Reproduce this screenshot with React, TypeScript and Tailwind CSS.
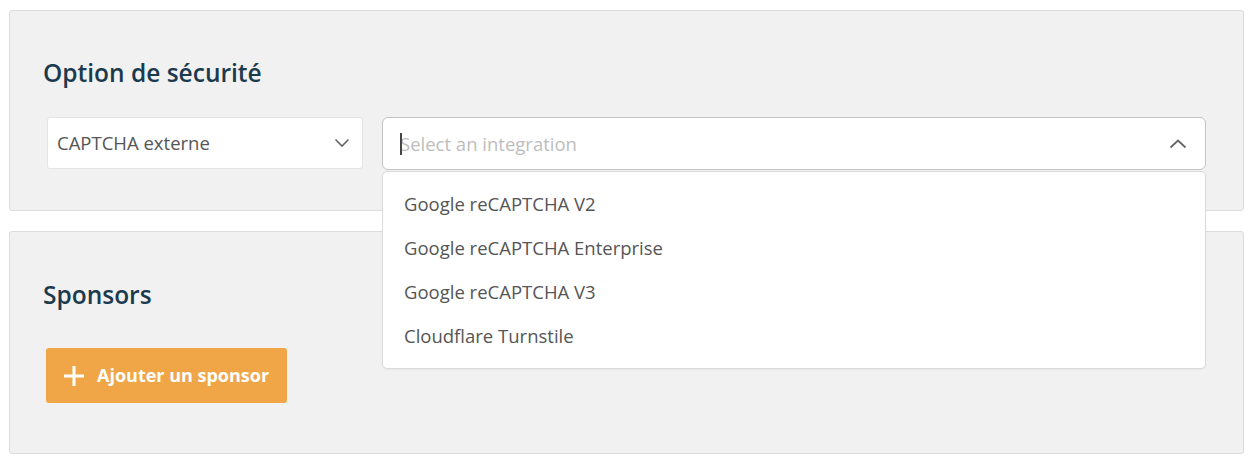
import React from "react";

export default function App() {
  const items = [
    "Google reCAPTCHA V2",
    "Google reCAPTCHA Enterprise",
    "Google reCAPTCHA V3",
    "Cloudflare Turnstile",
  ];
  return (
    <div className="w-[1254px] h-[464px] bg-white pl-[9px] pr-[10px] pt-[10px] font-['Open_Sans',sans-serif]">
      <div className="relative z-10 h-[201px] rounded-[3px] border border-[#dcdcdc] bg-[#f1f1f1] pl-[33px] pr-[37px] pt-[47px]">
        <h2 className="text-[24.5px] font-semibold leading-[30px] text-[#1b3a4e] font-['Open_Sans',sans-serif]">
          Option de sécurité
        </h2>
        <div className="mt-[29px] flex gap-[19px] pl-[4px]">
          <div className="flex h-[52px] w-[316px] items-center justify-between rounded-[3px] border border-[#e4e4e4] bg-white pl-[9px] pr-[12px]">
            <span className="text-[18.5px] text-[#555]">CAPTCHA externe</span>
            <svg width="16" height="10" viewBox="0 0 16 10" fill="none">
              <path d="M1.5 1.5 L8 8 L14.5 1.5" stroke="#666" strokeWidth="1.6" />
            </svg>
          </div>
          <div className="relative flex-1">
            <div className="flex h-[53px] items-center justify-between rounded-[6px] border border-[#c2c2c2] bg-white pl-[17px] pr-[18px]">
              <div className="relative flex items-center">
                <span className="absolute left-0 top-1/2 h-[22px] w-[2px] -translate-y-1/2 bg-[#444]" />
                <span className="text-[18.5px] text-[#bdbdbd]">Select an integration</span>
              </div>
              <svg width="18" height="10" viewBox="0 0 18 10" fill="none">
                <path d="M1.5 8.5 L9 1.5 L16.5 8.5" stroke="#666" strokeWidth="1.8" />
              </svg>
            </div>
            <div className="absolute left-0 right-0 top-[54px] h-[198px] rounded-[5px] border border-[#dadada] bg-white pt-[10px] shadow-[0_1px_2px_rgba(0,0,0,0.04)]">
              {items.map((it) => (
                <div key={it} className="flex h-[44px] items-center pl-[21px] text-[18.5px] text-[#555]">
                  {it}
                </div>
              ))}
            </div>
          </div>
        </div>
      </div>
      <div className="mt-[20px] h-[223px] rounded-[3px] border border-[#dcdcdc] bg-[#f1f1f1] pl-[33px] pt-[48px]">
        <h2 className="text-[24.5px] font-semibold leading-[30px] text-[#1b3a4e] font-['Open_Sans',sans-serif]">
          Sponsors
        </h2>
        <button className="mt-[38px] ml-[3px] flex h-[55px] w-[241px] items-center gap-[12px] rounded-[3px] bg-[#f0a646] pl-[17px] text-white">
          <svg width="22" height="22" viewBox="0 0 22 22" fill="none">
            <path d="M11 1 V21 M1 11 H21" stroke="white" strokeWidth="3" />
          </svg>
          <span className="text-[18px] font-bold font-['Open_Sans',sans-serif]">Ajouter un sponsor</span>
        </button>
      </div>
    </div>
  );
}
